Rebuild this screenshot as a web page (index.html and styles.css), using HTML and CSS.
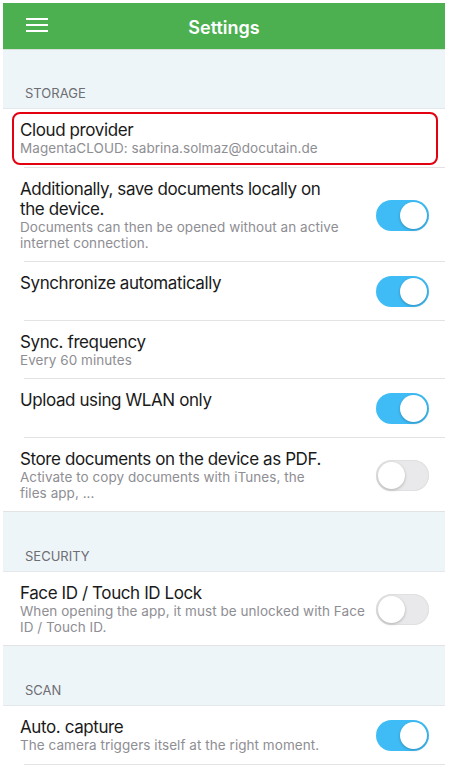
FILE: index.html
```html
<!DOCTYPE html>
<html lang="en">
<head>
    <meta charset="UTF-8">
    <meta name="viewport" content="width=device-width, initial-scale=1.0">
    <title>Settings</title>
    <link rel="stylesheet" href="styles.css">
</head>
<body>
    <div class="screen">
        <header class="topbar">
            <button class="menu-button" aria-label="Menu">
                <span></span><span></span><span></span>
            </button>
            <h1>Settings</h1>
        </header>

        <div class="section-title">STORAGE</div>
        <ul class="group">
            <li class="row highlight">
                <div class="text">
                    <div class="label">Cloud provider</div>
                    <div class="detail">MagentaCLOUD: sabrina.solmaz@docutain.de</div>
                </div>
            </li>
            <li class="row">
                <div class="text">
                    <div class="label">Additionally, save documents locally on<br>the device.</div>
                    <div class="detail">Documents can then be opened without an active<br>internet connection.</div>
                </div>
                <span class="switch on"></span>
            </li>
            <li class="row">
                <div class="text">
                    <div class="label">Synchronize automatically</div>
                </div>
                <span class="switch on"></span>
            </li>
            <li class="row">
                <div class="text">
                    <div class="label">Sync. frequency</div>
                    <div class="detail">Every 60 minutes</div>
                </div>
            </li>
            <li class="row">
                <div class="text">
                    <div class="label">Upload using WLAN only</div>
                </div>
                <span class="switch on"></span>
            </li>
            <li class="row">
                <div class="text">
                    <div class="label">Store documents on the device as PDF.</div>
                    <div class="detail">Activate to copy documents with iTunes, the<br>files app, ...</div>
                </div>
                <span class="switch"></span>
            </li>
        </ul>

        <div class="section-title">SECURITY</div>
        <ul class="group">
            <li class="row">
                <div class="text">
                    <div class="label">Face ID / Touch ID Lock</div>
                    <div class="detail">When opening the app, it must be unlocked with Face<br>ID / Touch ID.</div>
                </div>
                <span class="switch"></span>
            </li>
        </ul>

        <div class="section-title">SCAN</div>
        <ul class="group last">
            <li class="row">
                <div class="text">
                    <div class="label">Auto. capture</div>
                    <div class="detail">The camera triggers itself at the right moment.</div>
                </div>
                <span class="switch on"></span>
            </li>
        </ul>
    </div>
</body>
</html>
```

FILE: styles.css
```css
body {
    margin: 0;
    padding: 3px 6px 0 3px;
    background: white;
    font-family: 'Inter', 'Roboto', sans-serif;
    color: #1a1a1a;
}
.screen {
    width: 442px;
    height: 770px;
    overflow: hidden;
    background: #eef5f9;
    display: flex;
    flex-direction: column;
}
.topbar {
    flex: none;
    height: 47px;
    background: #4caf50;
    display: flex;
    align-items: center;
    justify-content: center;
    position: relative;
    border-bottom: 1px solid #d7e2d6;
    box-sizing: border-box;
}
.topbar h1 {
    margin: 0 0 -2px;
    color: white;
    font-size: 18px;
    font-weight: 600;
}
.menu-button {
    position: absolute;
    left: 23px;
    top: 15px;
    width: 22px;
    padding: 0;
    border: none;
    background: none;
    display: flex;
    flex-direction: column;
    gap: 4px;
}
.menu-button span {
    display: block;
    height: 2px;
    background: white;
}
.section-title {
    flex: none;
    height: 60px;
    box-sizing: border-box;
    display: flex;
    align-items: flex-end;
    padding: 0 22px 7px;
    font-size: 13px;
    color: #6d6d72;
    border-bottom: 1px solid #e4e8ea;
}
.topbar + .section-title {
    height: 59px;
}
.group {
    flex: none;
    list-style: none;
    margin: 0;
    padding: 0;
    background: white;
}
.group.last {
    flex: 1;
}
.row {
    position: relative;
    display: flex;
    align-items: center;
    min-height: 58px;
    padding: 11px 16px 11px 17px;
    box-sizing: border-box;
}
.row::after {
    content: '';
    position: absolute;
    left: 21px;
    right: 0;
    bottom: 0;
    border-bottom: 1px solid #e3e3e3;
}
.row:last-child::after {
    left: 0;
}
.group.last .row:last-child::after {
    left: 21px;
}
.row.highlight {
    min-height: 59px;
}
.row.highlight::before {
    content: '';
    position: absolute;
    left: 9px;
    right: 7px;
    top: 3px;
    bottom: 3px;
    border: 2px solid #e3000f;
    border-radius: 8px;
}
.text {
    flex: 1;
    align-self: flex-start;
    padding-right: 4px;
}
.label {
    font-size: 17px;
    line-height: 20px;
    letter-spacing: -0.4px;
}
.detail {
    font-size: 13.5px;
    line-height: 16px;
    letter-spacing: 0.05px;
    color: #8e8e93;
}
.switch {
    flex: none;
    width: 53px;
    height: 31px;
    margin: 3px 0;
    border-radius: 16px;
    background: #e9e9eb;
    position: relative;
    box-shadow: inset 0 0 0 1px #e0e0e0;
}
.switch::after {
    content: '';
    position: absolute;
    left: 2px;
    top: 2px;
    width: 27px;
    height: 27px;
    border-radius: 50%;
    background: white;
    box-shadow: 0 1px 3px rgba(0, 0, 0, 0.25);
}
.switch.on {
    background: #3fbcf6;
    box-shadow: none;
}
.switch.on::after {
    left: 24px;
}
```
